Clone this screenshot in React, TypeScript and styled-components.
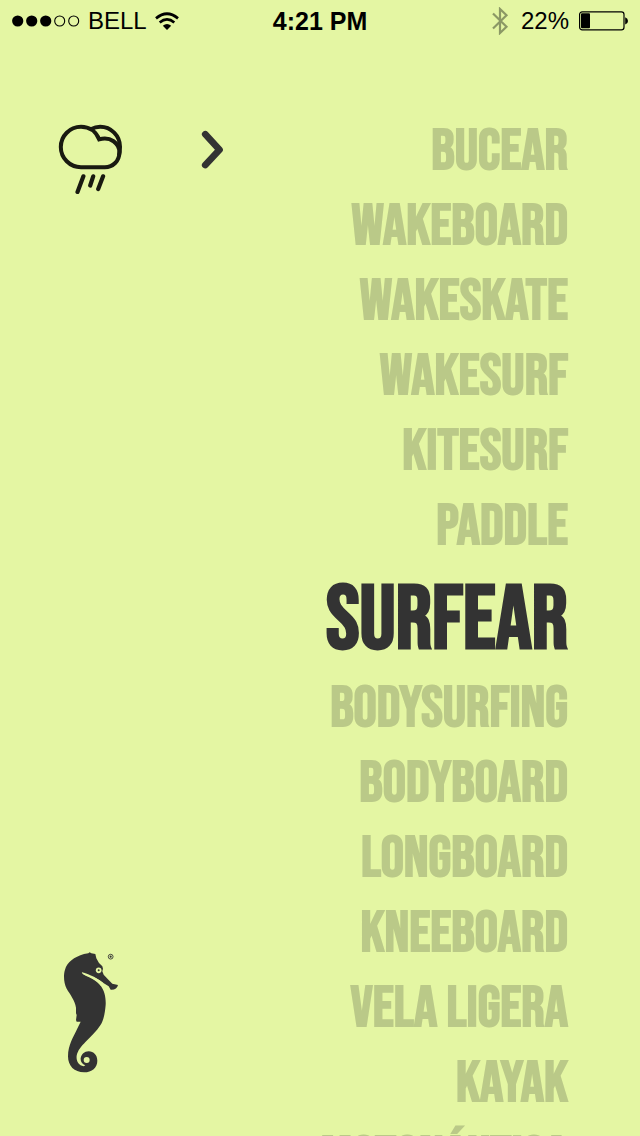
import React, { useState } from "react";
import styled, { createGlobalStyle } from "styled-components";

const ink = "#333333";

const GlobalStyle = createGlobalStyle`
  * { box-sizing: border-box; }
  body {
    margin: 0;
    background: #e4f6a3;
    color: ${ink};
    font-family: "Liberation Sans", Arial, sans-serif;
  }
`;

const Screen = styled.div`
  display: flex;
  flex-direction: column;
  height: 100vh;
  overflow: hidden;
`;

const StatusBar = styled.header`
  display: grid;
  grid-template-columns: 1fr auto 1fr;
  align-items: center;
  flex: none;
  height: 42px;
  padding: 0 12px;
  color: #000;
  font-size: 24px;
  line-height: 28px;
`;

const StatusGroup = styled.div<{ $end?: boolean }>`
  display: flex;
  align-items: center;
  justify-content: ${(p) => (p.$end ? "flex-end" : "flex-start")};
  gap: ${(p) => (p.$end ? 10 : 8)}px;
`;

const Clock = styled.time`
  font-size: 25px;
  font-weight: 700;
`;

const Main = styled.main`
  display: flex;
  justify-content: space-between;
  flex: 1;
  min-height: 0;
  padding: 72px 72px 0 56px;
`;

const Side = styled.aside`
  display: flex;
  flex-direction: column;
  justify-content: space-between;
  padding: 6px 0 63px;
`;

const Tools = styled.div`
  display: flex;
  align-items: flex-start;
  gap: 72px;
`;

const IconButton = styled.button`
  display: flex;
  padding: 0;
  border: 0;
  background: none;
  color: inherit;
  cursor: pointer;
`;

const LogoLink = styled.a`
  display: flex;
  align-self: flex-start;
  color: inherit;
`;

const SportList = styled.ul`
  margin: 0;
  padding: 0;
  list-style: none;
  text-align: right;
`;

const SportLink = styled.a<{ $active: boolean }>`
  display: block;
  padding-top: ${(p) => (p.$active ? 7 : 0)}px;
  color: ${(p) => (p.$active ? ink : "#bac988")};
  font-family: "Bebas Neue", "Liberation Sans Narrow", "Liberation Sans", sans-serif;
  font-size: ${(p) => (p.$active ? 90 : 58)}px;
  font-weight: 700;
  line-height: ${(p) => (p.$active ? 100 : 75)}px;
  text-decoration: none;
  text-transform: uppercase;
  white-space: nowrap;
`;

const sports = [
  "Bucear", "Wakeboard", "Wakeskate", "Wakesurf", "Kitesurf", "Paddle", "Surfear",
  "Bodysurfing", "Bodyboard", "Longboard", "Kneeboard", "Vela ligera", "Kayak", "Motonáutica",
];

const Signal = () => (
  <svg width="68" height="12" viewBox="0 0 68 12" role="img" aria-label="Signal">
    {[0, 1, 2, 3, 4].map((i) => (
      <circle key={i} cx={5.7 + i * 14} cy="6" r={i < 3 ? 5.6 : 5} fill={i < 3 ? "#000" : "none"} stroke={i < 3 ? "none" : "#000"} strokeWidth="1.1" />
    ))}
  </svg>
);

const Wifi = () => (
  <svg width="24" height="18" viewBox="0 0 24 18" role="img" aria-label="Wi-Fi">
    <g fill="none" stroke="#000" strokeWidth="2.7">
      <path d="M1 6.4Q12-2.9 23 6.4" />
      <path d="M4.7 10.5Q12 4.4 19.3 10.5" />
    </g>
    <path d="M7.8 13.7Q12 10.2 16.2 13.7L12 18Z" />
  </svg>
);

const Bluetooth = () => (
  <svg width="19" height="28" viewBox="0 0 19 28" role="img" aria-label="Bluetooth">
    <path d="M1 6.5L14.5 19.8L8 26V2L14.5 8.2L1 21.5" fill="none" stroke="#8b9865" strokeWidth="2.2" />
  </svg>
);

const Battery = () => (
  <svg width="49" height="20" viewBox="0 0 49 20" role="img" aria-label="Battery">
    <rect x="0.6" y="0.8" width="44.4" height="18" rx="2.6" fill="none" stroke="#000" strokeWidth="1.2" />
    <rect x="2" y="2.3" width="9" height="15" rx="1" />
    <path d="M46.2 6.3Q49 7.3 49 9.9T46.2 13.5Z" />
  </svg>
);

const Rain = () => (
  <svg width="70" height="74" viewBox="0 0 70 74" aria-hidden="true">
    <g fill="none" stroke="#191a10" strokeWidth="4">
      <path d="M25 47.2A20.2 20.2 0 0 1 25 6.8C33.2 6.8 40 11.5 43.2 19.4C54.5 16 63.4 23.5 63.4 32.2C63.4 41 57 47.2 48.8 47.2Z" />
      <path d="M34.7 9.3C38 7.6 41 6.8 44.2 6.8C55 6.8 64 15.8 64 26.8C64 30 63.8 32.5 63 35.5" />
      <path d="M27.4 56.3L21.5 72M37.2 56.3L34.2 65.5M47.1 56.3L42.2 69" strokeLinecap="round" strokeWidth="4.2" />
    </g>
  </svg>
);

const Chevron = () => (
  <svg width="28" height="60" viewBox="0 -9 28 60" aria-hidden="true">
    <path d="M7.3 5.3L21.5 20.8L7.3 36" fill="none" stroke={ink} strokeWidth="6.8" strokeLinecap="round" strokeLinejoin="round" />
  </svg>
);

const Seahorse = () => (
  <svg width="64" height="124" viewBox="18 26 192 372" aria-hidden="true">
    <path
      fill={ink}
      d="M102 41L115 39L119 36L124 39L136 41L139 54L147 68L157 78L159 85L157 93L161 103L173 116L187 130L204 134C202 144 194 149 182 148L176 138L159 127C145 117 133 111 120 108L99 98L96 96L98 101C115 108 138 117 151 135C164 151 168 174 167 193C165 219 160 243 151 255C139 274 123 288 107 304C94 317 83 330 80 346C78 363 86 375 101 378L106 375C96 372 91 363 92 354C94 342 103 333 116 333C131 333 142 345 142 361C142 382 126 396 102 396C73 396 54 377 54 348C54 315 70 290 81 267L92 244H80L78 239L80 224L78 219L78 202C75 180 60 162 50 145C41 129 40 103 45 88C51 66 72 50 102 41Z"
    />
    <path d="M95 96C105 98 112 101 121 105C136 111 148 119 160 128L153 137C142 121 120 112 102 103Z" fill="#e4f6a3" />
    <circle cx="146" cy="90" r="8.5" fill="#e4f6a3" />
    <circle cx="146" cy="90" r="3" fill={ink} />
    <circle cx="110" cy="359" r="9" fill="#e4f6a3" />
    <circle cx="182" cy="49" r="7.2" fill="none" stroke={ink} strokeWidth="2.6" />
    <circle cx="182" cy="49" r="3.2" fill={ink} />
  </svg>
);

export default function App() {
  const [active, setActive] = useState("Surfear");
  return (
    <Screen>
      <GlobalStyle />
      <StatusBar>
        <StatusGroup>
          <Signal />
          <span>BELL</span>
          <Wifi />
        </StatusGroup>
        <Clock>4:21 PM</Clock>
        <StatusGroup $end>
          <Bluetooth />
          <span>22%</span>
          <Battery />
        </StatusGroup>
      </StatusBar>
      <Main>
        <Side>
          <Tools>
            <IconButton type="button" aria-label="Weather"><Rain /></IconButton>
            <IconButton type="button" aria-label="Next"><Chevron /></IconButton>
          </Tools>
          <LogoLink href="#home" aria-label="Home"><Seahorse /></LogoLink>
        </Side>
        <nav aria-label="Sports">
          <SportList>
            {sports.map((sport) => (
              <li key={sport}>
                <SportLink
                  href={"#" + sport.toLowerCase().replace(" ", "-")}
                  $active={sport === active}
                  aria-current={sport === active ? "true" : undefined}
                  onClick={() => setActive(sport)}
                >
                  {sport}
                </SportLink>
              </li>
            ))}
          </SportList>
        </nav>
      </Main>
    </Screen>
  );
}
